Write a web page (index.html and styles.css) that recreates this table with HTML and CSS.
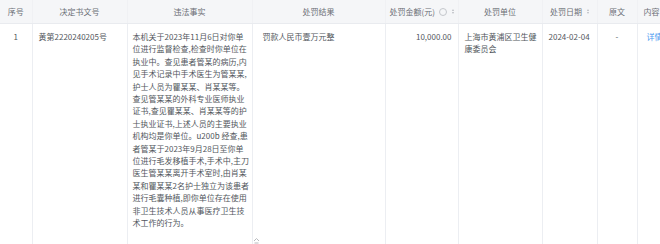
FILE: index.html
```html
<!DOCTYPE html>
<html lang="zh-CN">
<head>
<meta charset="utf-8">
<title>处罚信息</title>
<link rel="stylesheet" href="styles.css">
</head>
<body>
<table class="grid">
  <colgroup>
    <col class="c-no"><col class="c-doc"><col class="c-fact"><col class="c-result"><col class="c-amount"><col class="c-org"><col class="c-date"><col class="c-orig"><col class="c-more">
  </colgroup>
  <thead>
    <tr>
      <th>序号</th>
      <th>决定书文号</th>
      <th>违法事实</th>
      <th>处罚结果</th>
      <th><span class="th-inner">处罚金额(元)<span class="info"></span><span class="sort"><i class="up"></i><i class="down"></i></span></span></th>
      <th>处罚单位</th>
      <th><span class="th-inner">处罚日期<span class="sort"><i class="up"></i><i class="down"></i></span></span></th>
      <th>原文</th>
      <th class="left">内容</th>
    </tr>
  </thead>
  <tbody>
    <tr>
      <td class="center">1</td>
      <td>黄第2220240205号</td>
      <td class="fact">本机关于2023年11月6日对你单<br>位进行监督检查,检查时你单位在<br>执业中。查见患者管某的病历,内<br>见手术记录中手术医生为管某某,<br>护士人员为瞿某某、肖某某等。<br>查见管某某的外科专业医师执业<br>证书,查见瞿某某、肖某某等的护<br>士执业证书,上述人员的主要执业<br>机构均是你单位。u200b 经查,患<br>者管某于2023年9月28日至你单<br>位进行毛发移植手术,手术中,主刀<br>医生管某某离开手术室时,由肖某<br>某和瞿某某2名护士独立为该患者<br>进行毛囊种植,即你单位存在使用<br>非卫生技术人员从事医疗卫生技<br>术工作的行为。<span class="collapse"><svg width="7" height="7" viewBox="0 0 7 7"><path d="M1 4 L3.5 1.5 L6 4" fill="none" stroke="#b0b3b8" stroke-width="0.9"/><path d="M1.5 6 H5.5" stroke="#b0b3b8" stroke-width="0.9"/></svg></span></td>
      <td class="result">罚款人民币壹万元整</td>
      <td class="right">10,000.00</td>
      <td>上海市黄浦区卫生健<br>康委员会</td>
      <td>2024-02-04</td>
      <td class="center">-</td>
      <td class="more"><a class="link">详情</a></td>
    </tr>
  </tbody>
</table>
</body>
</html>
```

FILE: styles.css
```css
html, body {
  margin: 0;
  padding: 0;
  background: #ffffff;
  overflow: hidden;
}
body {
  width: 660px;
  height: 244px;
  font-family: "Noto Sans CJK SC", "Noto Sans", sans-serif;
  font-size: 8px;
  color: #555a60;
}
.grid {
  border-collapse: collapse;
  table-layout: fixed;
  width: 700px;
}
.c-no { width: 32px; }
.c-doc { width: 95px; }
.c-fact { width: 125px; }
.c-result { width: 133px; }
.c-amount { width: 73px; }
.c-org { width: 84px; }
.c-date { width: 55px; }
.c-orig { width: 40px; }
.c-more { width: 63px; }

.grid th {
  height: 23px;
  padding: 0 4px;
  background: #f5f6f8;
  color: #6b6f76;
  font-weight: normal;
  text-align: center;
  line-height: 12px;
  border-bottom: 1px solid #e9ebef;
  border-left: 1px solid #f0f1f4;
  white-space: nowrap;
}
.grid th:first-child { border-left: none; }
.grid th.left { text-align: left; padding-left: 6px; }
.th-inner {
  display: inline-flex;
  align-items: center;
}
.info {
  display: inline-block;
  width: 6px;
  height: 6px;
  border: 1px solid #c4c7cc;
  border-radius: 50%;
  margin-left: 4px;
}
.sort {
  display: inline-flex;
  flex-direction: column;
  gap: 1px;
  margin-left: 5px;
}
.sort i {
  display: block;
  width: 0;
  height: 0;
  border-left: 1.5px solid transparent;
  border-right: 1.5px solid transparent;
}
.sort .up { border-bottom: 2px solid #b8bbc0; }
.sort .down { border-top: 2px solid #b8bbc0; }

.grid td {
  vertical-align: top;
  padding: 7px 6px 0 6px;
  height: 221px;
  box-sizing: border-box;
  line-height: 12.4px;
  border-left: 1px solid #eceef2;
  white-space: nowrap;
  color: #52575d;
}
.grid td:first-child { border-left: none; }
.grid td.center { text-align: center; }
.grid td.right { text-align: right; }
.grid td.result { padding-left: 10px; }
.grid td.fact {
  position: relative;
  padding-left: 5px;
}
.collapse {
  position: absolute;
  right: -8px;
  bottom: 1px;
  display: block;
  width: 7px;
  height: 7px;
}
.collapse svg { display: block; }
.grid td.more { padding-left: 9px; }
.link {
  color: #4a9af0;
  text-decoration: none;
}
```
